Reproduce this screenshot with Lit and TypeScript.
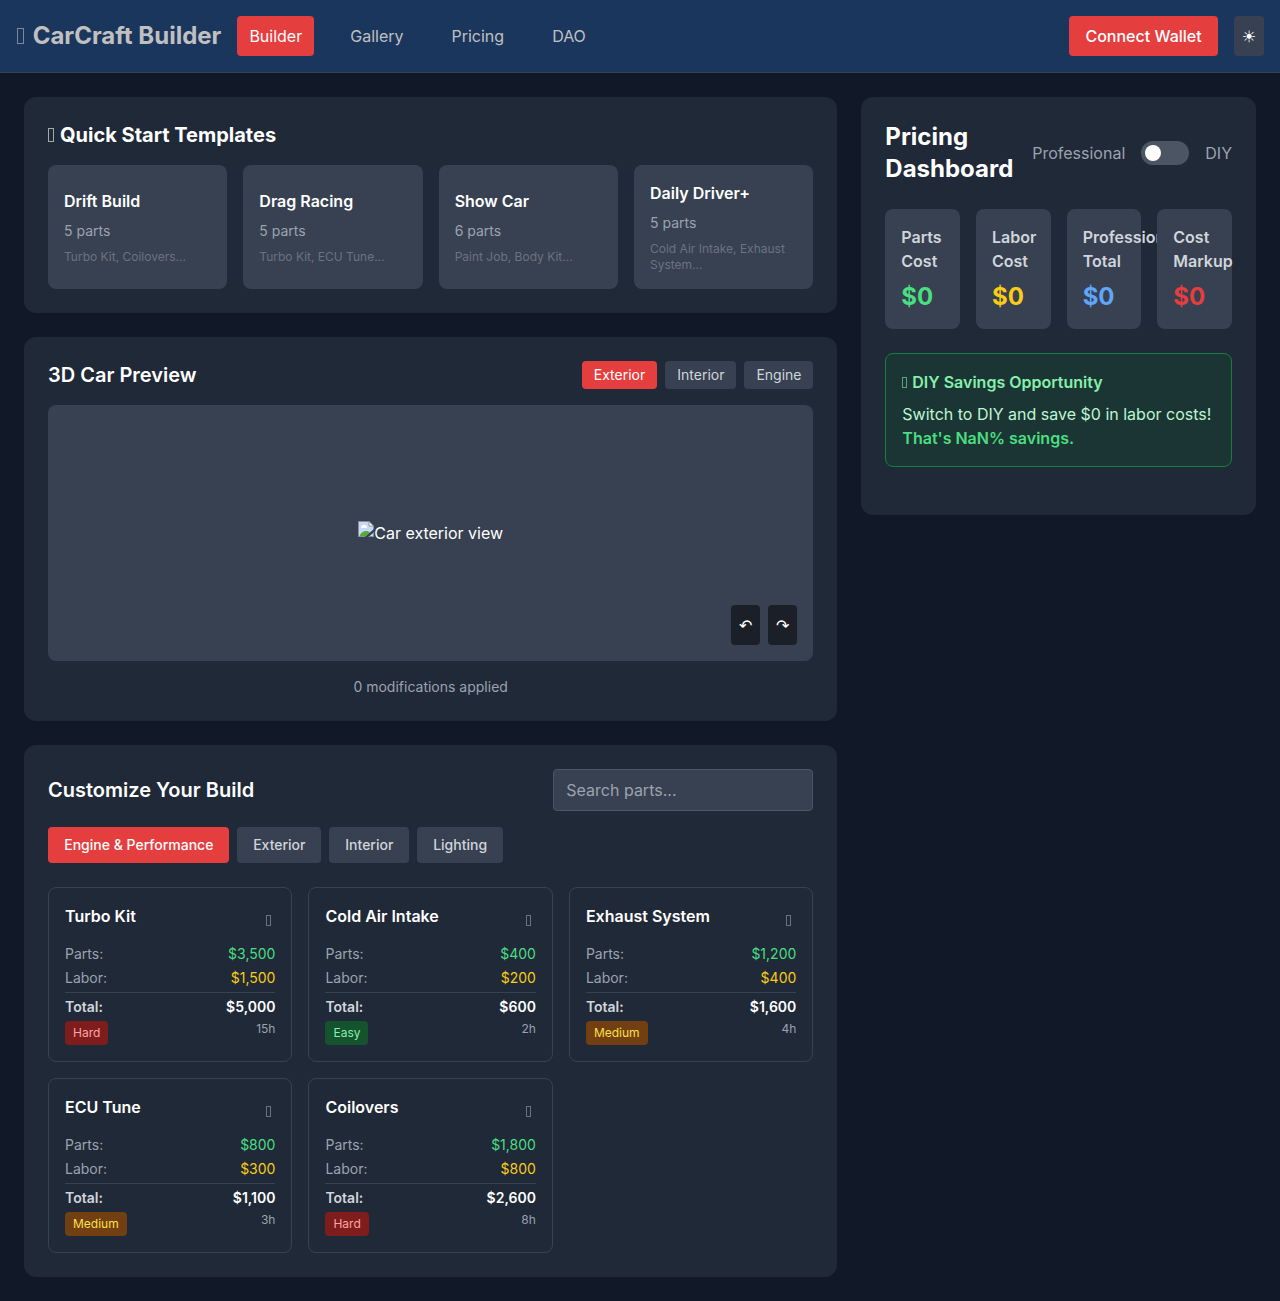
import { LitElement, html, css, svg } from "lit";
import { customElement, state } from "lit/decorators.js";
import { classMap } from "lit/directives/class-map.js";

interface Part {
  name: string;
  parts: number;
  labor: number;
  level: "Easy" | "Medium" | "Hard";
  hours: number;
}

const PARTS: Part[] = [
  { name: "Turbo Kit", parts: 3500, labor: 1500, level: "Hard", hours: 15 },
  { name: "Cold Air Intake", parts: 400, labor: 200, level: "Easy", hours: 2 },
  { name: "Exhaust System", parts: 1200, labor: 400, level: "Medium", hours: 4 },
  { name: "ECU Tune", parts: 800, labor: 300, level: "Medium", hours: 3 },
  { name: "Coilovers", parts: 1800, labor: 800, level: "Hard", hours: 8 },
];

const TEMPLATES = [
  { name: "Drift Build", count: 5, summary: "Turbo Kit, Coilovers..." },
  { name: "Drag Racing", count: 5, summary: "Turbo Kit, ECU Tune..." },
  { name: "Show Car", count: 6, summary: "Paint Job, Body Kit..." },
  { name: "Daily Driver+", count: 5, summary: "Cold Air Intake, Exhaust System..." },
];

const STATS = [
  { label: "Parts Cost", tone: "green" },
  { label: "Labor Cost", tone: "yellow" },
  { label: "Professional Total", tone: "blue" },
  { label: "Cost Markup", tone: "red" },
];

const money = (n: number) => "$" + n.toLocaleString("en-US");

const shared = css`
  * {
    box-sizing: border-box;
    margin: 0;
    padding: 0;
  }
  button,
  input {
    font: inherit;
    color: inherit;
    border: 0;
    background: none;
  }
  .panel {
    background: #1f2937;
    border-radius: 12px;
    padding: 24px;
  }
  .green {
    color: #4ade80;
  }
  .yellow {
    color: #facc15;
  }
  .blue {
    color: #60a5fa;
  }
  .red {
    color: #e53e3e;
  }
  /* Hollow box glyph that leads a heading or fills an icon button. */
  .glyph {
    display: inline-block;
    width: 5px;
    height: 11px;
    margin: 0 0.9px 0 0;
    border: 1px solid currentColor;
    opacity: 0.6;
  }
`;

@customElement("app-header")
class AppHeader extends LitElement {
  static styles = [
    shared,
    css`
      :host {
        display: block;
      }
      .bar {
        display: flex;
        align-items: center;
        justify-content: space-between;
        padding: 16px;
        background: #1a365d;
        border-bottom: 1px solid #374151;
      }
      .group {
        display: flex;
        align-items: center;
        gap: 16px;
      }
      .logo {
        font-size: 24px;
        line-height: 32px;
        font-weight: 700;
        color: #c0c0c0;
      }
      .logo .glyph {
        width: 7px;
        height: 16px;
        margin: 0 3.2px 0 0.8px;
      }
      .nav {
        display: flex;
        gap: 24px;
      }
      .link {
        padding: 8px 12px;
        border-radius: 4px;
        color: #c0c0c0;
      }
      .active {
        background: #e53e3e;
        color: #fff;
      }
      .wallet {
        padding: 8px 16px;
        border-radius: 4px;
        background: #e53e3e;
        color: #fff;
        font-weight: 500;
      }
      .theme {
        padding: 9px 8px 7px;
        border-radius: 4px;
        background: #374151;
        font-family: "DejaVu Sans", sans-serif;
      }
    `,
  ];
  render() {
    return html`<header class="bar">
      <div class="group">
        <h1 class="logo"><span class="glyph"></span> CarCraft Builder</h1>
        <nav class="nav">
          ${["Builder", "Gallery", "Pricing", "DAO"].map(
            (t, i) => html`<button class=${classMap({ link: true, active: i === 0 })}>${t}</button>`
          )}
        </nav>
      </div>
      <div class="group">
        <button class="wallet">Connect Wallet</button>
        <button class="theme">☀</button>
      </div>
    </header>`;
  }
}

@customElement("quick-templates")
class QuickTemplates extends LitElement {
  static styles = [
    shared,
    css`
      :host {
        display: block;
      }
      .title {
        font-size: 20px;
        line-height: 28px;
        font-weight: 700;
        margin-bottom: 16px;
      }
      .title .glyph {
        width: 6px;
        height: 14px;
        margin: 0 1px 0 0.3px;
      }
      .grid {
        display: grid;
        grid-template-columns: repeat(4, minmax(0, 1fr));
        gap: 16px;
      }
      .card {
        background: #374151;
        border-radius: 8px;
        padding: 16px;
        text-align: left;
      }
      .name {
        font-size: 16px;
        line-height: 24px;
        font-weight: 600;
      }
      .count {
        margin-top: 8px;
        font-size: 14px;
        line-height: 20px;
        color: #9ca3af;
      }
      .summary {
        margin-top: 8px;
        font-size: 12px;
        line-height: 16px;
        color: #6b7280;
      }
    `,
  ];
  render() {
    return html`<section class="panel">
      <h2 class="title"><span class="glyph"></span> Quick Start Templates</h2>
      <div class="grid">
        ${TEMPLATES.map(
          (t) => html`<button class="card">
            <h3 class="name">${t.name}</h3>
            <p class="count">${t.count} parts</p>
            <div class="summary">${t.summary}</div>
          </button>`
        )}
      </div>
    </section>`;
  }
}

const missingImage = svg`
  <path d="M0.5 0.5H11L15.5 5V9L8.5 15.5H0.5Z" fill="#c6d9f7" />
  <path d="M3 6.2a1.6 1.6 0 0 1 1.6-1.8a2 2 0 0 1 3.4 0.4a1.2 1.2 0 0 1 0.6 2.2H3.6Z" fill="#fff" />
  <path d="M1.5 15C3 11.8 5.5 10 8 10c1.8 0 3 0.6 4 1.6L8.2 15Z" fill="#56ab37" />
  <path d="M0.5 16V0.5H11.2" fill="none" stroke="#8b8f94" />
  <path d="M11 0.5L15.5 5H11Z" fill="#fff" stroke="#8b8f94" stroke-width="0.9" />
  <path d="M15.5 5V15.5" fill="none" stroke="#8b8f94" />
  <path d="M0 15.5H16" fill="none" stroke="#8b8f94" />
  <path d="M11.5 15L15 11.9V15Z" fill="#c6d9f7" />
  <path d="M7.8 16.6L16.6 8.8" stroke="#374151" stroke-width="2" />
`;

@customElement("car-preview")
class CarPreview extends LitElement {
  static styles = [
    shared,
    css`
      :host {
        display: block;
      }
      .head {
        display: flex;
        justify-content: space-between;
        align-items: center;
        margin-bottom: 16px;
      }
      .title {
        font-size: 20px;
        line-height: 28px;
        font-weight: 600;
      }
      .views {
        display: flex;
        gap: 8px;
      }
      .view {
        padding: 4px 11.8px 4px 12.2px;
        border-radius: 4px;
        font-size: 14px;
        line-height: 20px;
        background: #374151;
        color: #d1d5db;
      }
      .active {
        background: #e53e3e;
        color: #fff;
      }
      .stage {
        position: relative;
        height: 256px;
        border-radius: 8px;
        background: #374151;
        display: flex;
        align-items: center;
        justify-content: center;
      }
      .picture {
        display: flex;
        align-items: flex-start;
      }
      .broken {
        width: 16px;
        height: 16px;
      }
      .controls {
        position: absolute;
        right: 16px;
        bottom: 16px;
        display: flex;
        gap: 8px;
      }
      .turn {
        padding: 8px;
        border-radius: 4px;
        background: rgba(0, 0, 0, 0.5);
        color: #fff;
      }
      .note {
        margin-top: 16px;
        text-align: center;
        font-size: 14px;
        line-height: 20px;
        color: #9ca3af;
      }
    `,
  ];
  @state() private view = "Exterior";
  render() {
    return html`<section class="panel">
      <div class="head">
        <h2 class="title">3D Car Preview</h2>
        <div class="views">
          ${["Exterior", "Interior", "Engine"].map(
            (v) => html`<button
              class=${classMap({ view: true, active: v === this.view })}
              @click=${() => (this.view = v)}
            >${v}</button>`
          )}
        </div>
      </div>
      <div class="stage">
        <div class="picture">
          <svg class="broken" viewBox="0 0 16 16">${missingImage}</svg>
          <span>Car ${this.view.toLowerCase()} view</span>
        </div>
        <div class="controls">
          <button class="turn">↶</button>
          <button class="turn">↷</button>
        </div>
      </div>
      <p class="note">0 modifications applied</p>
    </section>`;
  }
}

@customElement("part-catalog")
class PartCatalog extends LitElement {
  static styles = [
    shared,
    css`
      :host {
        display: block;
      }
      .head {
        display: flex;
        justify-content: space-between;
        align-items: center;
        margin-bottom: 16px;
      }
      .title {
        font-size: 20px;
        line-height: 28px;
        font-weight: 600;
      }
      .search {
        width: 260px;
        height: 42px;
        padding: 8px 12px;
        border: 1px solid #4b5563;
        border-radius: 4px;
        background: #374151;
      }
      .search::placeholder {
        color: #9ca3af;
      }
      .tabs {
        display: flex;
        gap: 7.8px;
        margin-bottom: 24px;
      }
      .tab {
        padding: 8px 15.8px 8px 16.2px;
        border-radius: 4px;
        font-size: 14px;
        line-height: 20px;
        font-weight: 500;
        background: #374151;
        color: #d1d5db;
      }
      .active {
        background: #e53e3e;
        color: #fff;
      }
      .grid {
        display: grid;
        grid-template-columns: repeat(3, minmax(0, 1fr));
        gap: 16px;
      }
      .card {
        padding: 16px;
        border: 1px solid #374151;
        border-radius: 8px;
      }
      .top {
        display: flex;
        justify-content: space-between;
        align-items: flex-start;
        margin-bottom: 8px;
      }
      .name {
        font-size: 16px;
        font-weight: 600;
      }
      .save {
        padding: 4px;
        color: #9ca3af;
      }
      .rows {
        display: flex;
        flex-direction: column;
        gap: 4px;
        font-size: 14px;
        line-height: 20px;
      }
      .row {
        display: flex;
        justify-content: space-between;
      }
      .label {
        color: #9ca3af;
      }
      .total {
        border-top: 1px solid #374151;
        padding-top: 4px;
        font-weight: 600;
      }
      .total-label {
        color: #d1d5db;
      }
      .foot {
        align-items: flex-start;
        font-size: 12px;
        line-height: 16px;
      }
      .badge {
        padding: 4px 8px;
        border-radius: 4px;
      }
      .easy {
        background: #14532d;
        color: #86efac;
      }
      .medium {
        background: #713f12;
        color: #fde047;
      }
      .hard {
        background: #7f1d1d;
        color: #fca5a5;
      }
    `,
  ];
  render() {
    return html`<section class="panel">
      <div class="head">
        <h2 class="title">Customize Your Build</h2>
        <input class="search" type="text" placeholder="Search parts..." />
      </div>
      <div class="tabs">
        ${["Engine & Performance", "Exterior", "Interior", "Lighting"].map(
          (t, i) => html`<button class=${classMap({ tab: true, active: i === 0 })}>${t}</button>`
        )}
      </div>
      <div class="grid">
        ${PARTS.map(
          (p) => html`<article class="card">
            <div class="top">
              <h3 class="name">${p.name}</h3>
              <button class="save"><span class="glyph"></span></button>
            </div>
            <div class="rows">
              <div class="row"><span class="label">Parts:</span><span class="green">${money(p.parts)}</span></div>
              <div class="row"><span class="label">Labor:</span><span class="yellow">${money(p.labor)}</span></div>
              <div class="row total"><span class="total-label">Total:</span><span>${money(p.parts + p.labor)}</span></div>
              <div class="row foot"><span class="badge ${p.level.toLowerCase()}">${p.level}</span><span class="label">${p.hours}h</span></div>
            </div>
          </article>`
        )}
      </div>
    </section>`;
  }
}

@customElement("pricing-dashboard")
class PricingDashboard extends LitElement {
  static styles = [
    shared,
    css`
      :host {
        display: block;
      }
      .head {
        display: flex;
        justify-content: space-between;
        align-items: center;
        margin-bottom: 24px;
      }
      .title {
        font-size: 24px;
        line-height: 32px;
        font-weight: 700;
      }
      .mode {
        display: flex;
        align-items: center;
        gap: 16px;
        color: #9ca3af;
      }
      .toggle {
        display: flex;
        align-items: center;
        width: 48px;
        height: 24px;
        padding: 4px;
        border-radius: 12px;
        background: #4b5563;
      }
      .knob {
        width: 16px;
        height: 16px;
        border-radius: 50%;
        background: #fff;
      }
      .stats {
        display: grid;
        grid-template-columns: repeat(4, minmax(0, 1fr));
        gap: 16px;
        margin-bottom: 24px;
      }
      .stat {
        padding: 16px;
        border-radius: 8px;
        background: #374151;
      }
      .caption {
        font-size: 16px;
        font-weight: 600;
        color: #d1d5db;
        margin-bottom: 8px;
      }
      .value {
        font-size: 24px;
        line-height: 32px;
        font-weight: 700;
      }
      .savings {
        padding: 16px;
        border: 1px solid #15803d;
        border-radius: 8px;
        background: rgba(20, 83, 45, 0.3);
        margin-bottom: 24px;
      }
      .savings-title {
        font-size: 16px;
        font-weight: 600;
        color: #86efac;
        margin-bottom: 8px;
      }
      .savings-text {
        color: #bbf7d0;
      }
      .strong {
        display: block;
        font-weight: 600;
        color: #4ade80;
      }
    `,
  ];
  render() {
    return html`<section class="panel">
      <div class="head">
        <h2 class="title">Pricing Dashboard</h2>
        <div class="mode">
          <span>Professional</span>
          <button class="toggle"><span class="knob"></span></button>
          <span>DIY</span>
        </div>
      </div>
      <div class="stats">
        ${STATS.map(
          (s) => html`<div class="stat">
            <h3 class="caption">${s.label}</h3>
            <p class="value ${s.tone}">$0</p>
          </div>`
        )}
      </div>
      <div class="savings">
        <h3 class="savings-title"><span class="glyph"></span> DIY Savings Opportunity</h3>
        <p class="savings-text">
          Switch to DIY and save $0 in labor costs!
          <span class="strong">That's NaN% savings.</span>
        </p>
      </div>
    </section>`;
  }
}

@customElement("app-root")
class AppRoot extends LitElement {
  static styles = [
    shared,
    css`
      :host {
        display: block;
        min-height: 100vh;
        background: #111827;
        color: #fff;
        font-family: Inter, "Liberation Sans", sans-serif;
        font-size: 16px;
        line-height: 24px;
      }
      .main {
        display: grid;
        grid-template-columns: repeat(3, minmax(0, 1fr));
        align-items: start;
        gap: 24px;
        padding: 24px;
      }
      .build {
        grid-column: span 2;
        display: flex;
        flex-direction: column;
        gap: 24px;
      }
    `,
  ];
  render() {
    return html`<app-header></app-header>
      <main class="main">
        <div class="build">
          <quick-templates></quick-templates>
          <car-preview></car-preview>
          <part-catalog></part-catalog>
        </div>
        <pricing-dashboard></pricing-dashboard>
      </main>`;
  }
}
